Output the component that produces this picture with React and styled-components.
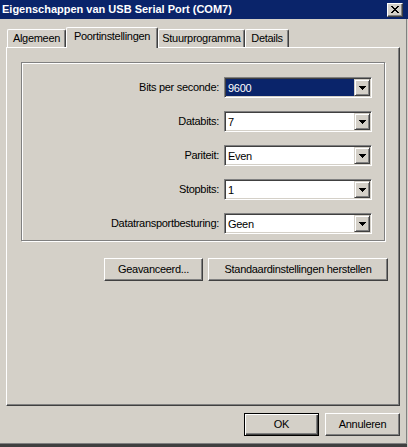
import React from "react";
import styled, { createGlobalStyle, css } from "styled-components";

const GlobalStyle = createGlobalStyle`
  html, body {
    margin: 0;
    padding: 0;
    background: #d4d0c8;
  }
  * {
    box-sizing: border-box;
  }
`;

const raised = css`
  border-top: 1px solid #ffffff;
  border-left: 1px solid #ffffff;
  border-right: 1px solid #404040;
  border-bottom: 1px solid #404040;
  box-shadow: inset -1px -1px 0 #808080, inset 1px 1px 0 #d4d0c8;
`;

const Window = styled.div`
  width: 408px;
  height: 447px;
  overflow: hidden;
  display: flex;
  flex-direction: column;
  background: #d4d0c8;
  font-family: Tahoma, "Liberation Sans", Arial, sans-serif;
  font-size: 11px;
  letter-spacing: -0.3px;
  color: #000;
`;

const TitleBar = styled.div`
  height: 19px;
  flex: none;
  display: flex;
  align-items: center;
  justify-content: space-between;
  background: #0a246a;
  padding: 0 5px 0 2px;
`;

const Title = styled.div`
  color: #fff;
  font-weight: bold;
  font-size: 11px;
  letter-spacing: 0;
  line-height: 13px;
  white-space: nowrap;
`;

const CloseButton = styled.div`
  width: 16px;
  height: 14px;
  background: #d4d0c8;
  display: flex;
  align-items: center;
  justify-content: center;
  ${raised};
`;

const Body = styled.div`
  width: 407px;
  height: 425px;
  flex: none;
  padding: 8px 6px 0 6px;
  border-right: 1px solid #808080;
  border-bottom: 1px solid #808080;
  box-shadow: 0 3px 0 #404040;
  display: flex;
  flex-direction: column;
`;

const TabStrip = styled.div`
  height: 20px;
  display: flex;
  align-items: flex-end;
  padding-left: 1px;
`;

const Tab = styled.div`
  position: relative;
  width: ${(p) => p.$width}px;
  height: ${(p) => (p.$active ? 21 : 18)}px;
  margin-bottom: ${(p) => (p.$active ? -1 : 0)}px;
  z-index: ${(p) => (p.$active ? 2 : 1)};
  padding-top: ${(p) => (p.$active ? 2 : 2)}px;
  background: #d4d0c8;
  border-top: 1px solid #fff;
  border-left: 1px solid #fff;
  border-right: 1px solid #404040;
  border-top-left-radius: 2px;
  border-top-right-radius: 2px;
  box-shadow: inset -1px 0 0 #808080;
  text-align: center;
  line-height: 13px;
  white-space: nowrap;
`;

const TabPanel = styled.div`
  width: 394px;
  height: 359px;
  flex: none;
  border-top: 1px solid #fff;
  border-left: 1px solid #fff;
  border-right: 1px solid #404040;
  border-bottom: 1px solid #404040;
  box-shadow: inset -1px -1px 0 #808080;
  padding: 14px 13px 0 14px;
  display: flex;
  flex-direction: column;
`;

const GroupBox = styled.div`
  width: 364px;
  height: 179px;
  border: 1px solid #808080;
  box-shadow: inset 1px 1px 0 #fff, 1px 1px 0 #fff;
  padding: 14px 12px 0 0;
  display: grid;
  grid-template-columns: 1fr 148px;
  grid-auto-rows: 21px;
  column-gap: 5px;
  row-gap: 13px;
`;

const Label = styled.div`
  display: flex;
  align-items: center;
  justify-content: flex-end;
  white-space: nowrap;
  padding-bottom: 1px;
`;

const Combo = styled.div`
  height: 21px;
  background: #fff;
  display: flex;
  padding: 1px;
  border-top: 1px solid #808080;
  border-left: 1px solid #808080;
  border-right: 1px solid #fff;
  border-bottom: 1px solid #fff;
  box-shadow: inset 1px 1px 0 #404040, inset -1px -1px 0 #d4d0c8;
`;

const ComboValue = styled.div`
  flex: 1;
  display: flex;
  align-items: center;
  padding-left: 2px;
  background: ${(p) => (p.$selected ? "#0a246a" : "#fff")};
  color: ${(p) => (p.$selected ? "#fff" : "#000")};
`;

const DropButton = styled.div`
  width: 16px;
  height: 17px;
  flex: none;
  background: #d4d0c8;
  display: flex;
  align-items: center;
  justify-content: center;
  border-top: 1px solid #d4d0c8;
  border-left: 1px solid #d4d0c8;
  border-right: 1px solid #404040;
  border-bottom: 1px solid #404040;
  box-shadow: inset 1px 1px 0 #fff, inset -1px -1px 0 #808080;
`;

const ButtonRow = styled.div`
  display: flex;
  justify-content: flex-end;
  gap: ${(p) => p.$gap}px;
  margin-top: ${(p) => p.$top}px;
  margin-right: ${(p) => p.$right}px;
`;

const Button = styled.div`
  width: ${(p) => p.$width}px;
  height: 23px;
  display: flex;
  align-items: center;
  justify-content: center;
  white-space: nowrap;
  background: #d4d0c8;
  padding-bottom: 1px;
  ${(p) =>
    p.$default
      ? css`
          border: 1px solid #000;
          box-shadow: inset 1px 1px 0 #fff, inset -1px -1px 0 #404040,
            inset -2px -2px 0 #808080;
        `
      : raised}
`;

function Arrow() {
  return (
    <svg width="7" height="4" viewBox="0 0 7 4">
      <path d="M0 0h7v1H0zM1 1h5v1H1zM2 2h3v1H2zM3 3h1v1H3z" fill="#000" />
    </svg>
  );
}

function CloseIcon() {
  return (
    <svg width="8" height="7" viewBox="0 0 8 7" shapeRendering="crispEdges">
      <path
        d="M0 0h2v1h1v1h2V1h1V0h2v1H7v1H6v1H5v1h1v1h1v1h1v1H6V6H5V5H3v1H2v1H0V6h1V5h1V4h1V3H2V2H1V1H0z"
        fill="#000"
      />
    </svg>
  );
}

const tabs = [
  { name: "Algemeen", width: 59 },
  { name: "Poortinstellingen", width: 92, active: true },
  { name: "Stuurprogramma", width: 87 },
  { name: "Details", width: 44 },
];

const fields = [
  { label: "Bits per seconde:", value: "9600", selected: true },
  { label: "Databits:", value: "7" },
  { label: "Pariteit:", value: "Even" },
  { label: "Stopbits:", value: "1" },
  { label: "Datatransportbesturing:", value: "Geen" },
];

export default function App() {
  return (
    <>
      <GlobalStyle />
      <Window>
        <TitleBar>
          <Title>Eigenschappen van USB Serial Port (COM7)</Title>
          <CloseButton>
            <CloseIcon />
          </CloseButton>
        </TitleBar>
        <Body>
          <TabStrip>
            {tabs.map((t) => (
              <Tab key={t.name} $width={t.width} $active={t.active}>
                {t.name}
              </Tab>
            ))}
          </TabStrip>
          <TabPanel>
            <GroupBox>
              {fields.map((f) => (
                <React.Fragment key={f.label}>
                  <Label>{f.label}</Label>
                  <Combo>
                    <ComboValue $selected={f.selected}>{f.value}</ComboValue>
                    <DropButton>
                      <Arrow />
                    </DropButton>
                  </Combo>
                </React.Fragment>
              ))}
            </GroupBox>
            <ButtonRow $gap={5} $top={17} $right={-2}>
              <Button $width={99}>Geavanceerd...</Button>
              <Button $width={180}>Standaardinstellingen herstellen</Button>
            </ButtonRow>
          </TabPanel>
          <ButtonRow $gap={6} $top={7} $right={0}>
            <Button $width={75} $default>
              OK
            </Button>
            <Button $width={75}>Annuleren</Button>
          </ButtonRow>
        </Body>
      </Window>
    </>
  );
}
